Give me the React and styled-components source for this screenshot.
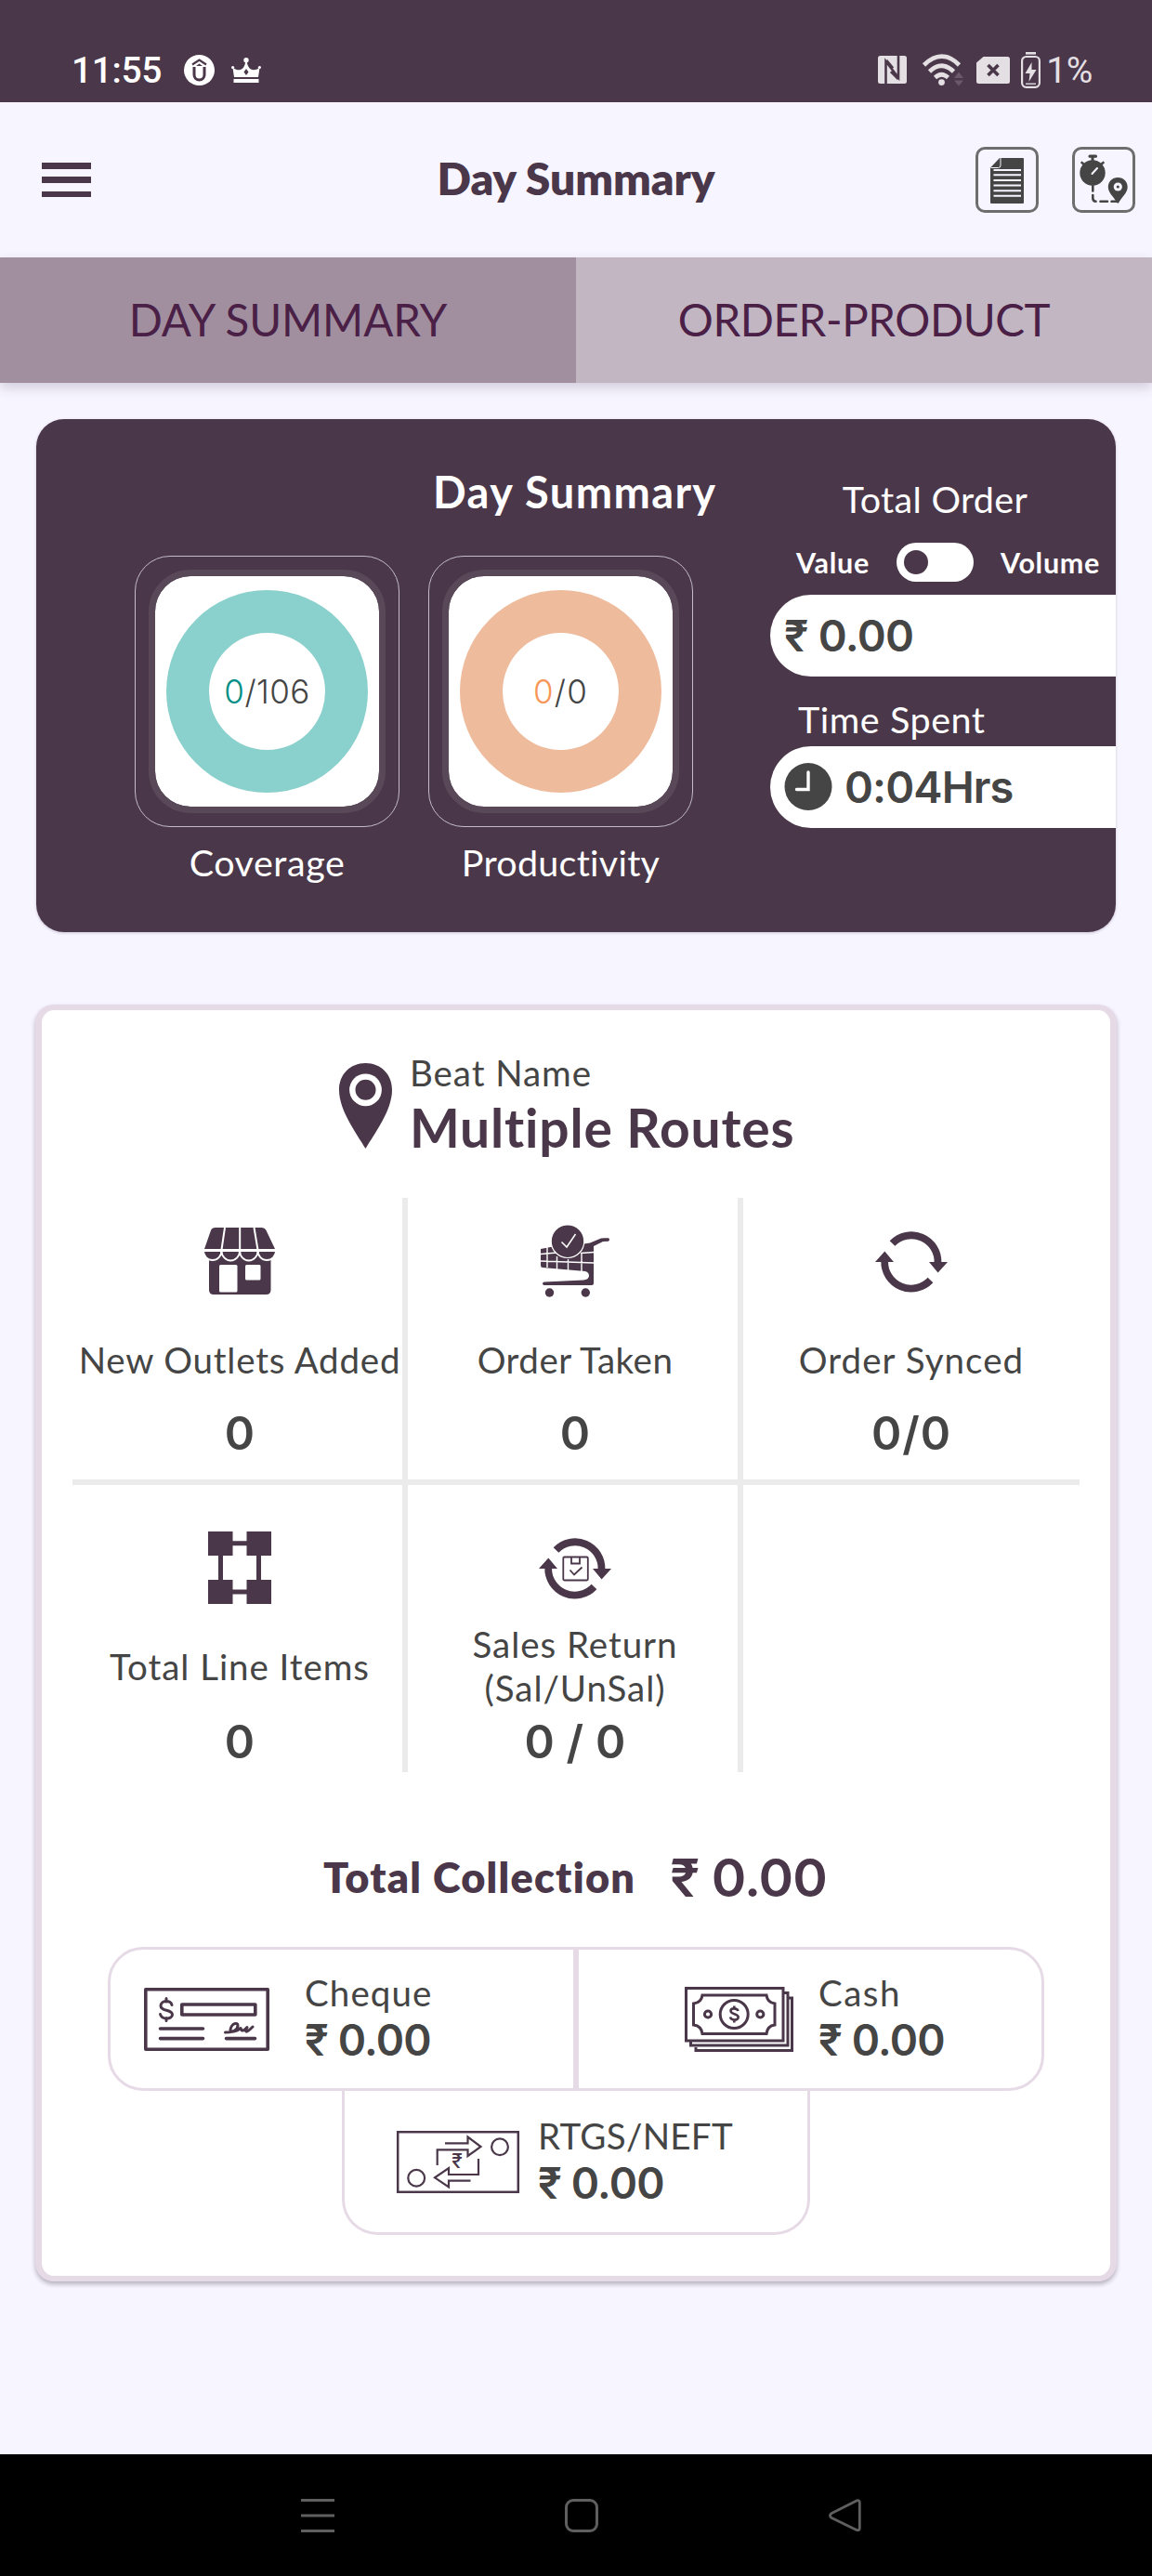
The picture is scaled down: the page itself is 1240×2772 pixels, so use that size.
import React from "react";
import styled, { createGlobalStyle } from "styled-components";

const plum = "#4a3749";
const ink = "#444544";
const lilac = "#e6dae6";
const rule = "#ebebeb";

const Global = createGlobalStyle`
  * { box-sizing: border-box; }
  body { margin: 0; background: #f7f5ff; }
  svg { display: block; flex: none; overflow: visible; }
`;

const Screen = styled.div`
  width: 1240px;
  height: 2772px;
  display: flex;
  flex-direction: column;
  background: #f7f5ff;
  font-family: Lato, "Open Sans", sans-serif;
  font-variant-ligatures: none;
  white-space: nowrap;
  overflow: hidden;
`;

/* ---------- status bar ---------- */
const StatusBar = styled.div`
  height: 110px;
  flex: none;
  background: ${plum};
  padding: 40px 64px 0 77px;
  display: flex;
  justify-content: space-between;
`;
const StatusGroup = styled.div`
  display: flex;
  align-items: center;
  height: 70px;
  color: ${(p) => (p.$dim ? "#e3dfe3" : "#fff")};
  font: 500 39px/70px Roboto, sans-serif;
  letter-spacing: -0.4px;
`;
const Clock = styled.span`
  width: 121px;
  padding-top: 1px;
`;
const Percent = styled.span`
  margin-left: 6px;
  padding-top: 1px;
  font-weight: 450;
`;
const Slot = styled.span`margin-left: ${(p) => p.$gap}px;`;

/* ---------- header ---------- */
const Header = styled.header`
  height: 167px;
  flex: none;
  display: grid;
  grid-template-columns: 400px 1fr 427px;
  align-items: center;
  padding: 0 18px 0 45px;
`;
const Menu = styled.button`
  width: 53px;
  height: 37px;
  padding: 0;
  border: 0;
  background: none;
  display: flex;
  flex-direction: column;
  justify-content: space-between;
`;
const MenuBar = styled.i`
  width: 53px;
  height: 6.5px;
  background: ${plum};
`;
const PageTitle = styled.h1`
  margin: 0 0 3px;
  text-align: center;
  font-size: 48px;
  font-weight: 800;
  letter-spacing: -0.1px;
  line-height: 60px;
  color: ${plum};
`;
const Actions = styled.div`
  display: flex;
  justify-content: flex-end;
  gap: 36px;
`;
const Action = styled.button`
  width: 68px;
  height: 71px;
  padding: 0;
  border: 3px solid #6e6e6e;
  border-radius: 10px;
  background: none;
  svg { margin: -3px; }
`;

/* ---------- tabs ---------- */
const Tabs = styled.nav`
  display: flex;
  height: 135px;
  flex: none;
  box-shadow: 0 5px 12px rgba(60, 40, 70, 0.2);
`;
const Tab = styled.div`
  flex: 1;
  display: flex;
  align-items: center;
  justify-content: center;
  padding-bottom: 2px;
  background: ${(p) => (p.$active ? "#a18f9f" : "#c2b6c3")};
  color: #4a2047;
  font-size: 47.5px;
  letter-spacing: ${(p) => (p.$active ? -0.05 : -0.4)}px;
`;

/* ---------- hero ---------- */
const Hero = styled.section`
  width: 1162px;
  height: 552px;
  flex: none;
  margin: 39px 0 0 39px;
  border-radius: 30px;
  overflow: hidden;
  background: ${plum};
  color: #fff;
  display: flex;
  box-shadow: 0 1px 3px rgba(60, 40, 70, 0.25);
`;
const Progress = styled.div`
  width: 790px;
  flex: none;
  padding-top: 54px;
`;
const HeroTitle = styled.h2`
  margin: 0 0 45px 427px;
  height: 48px;
  font-size: 47px;
  font-weight: 700;
  letter-spacing: 1.4px;
  line-height: 48px;
`;
const Tiles = styled.div`
  display: flex;
  gap: 31px;
  padding-left: 106px;
`;
const Tile = styled.div`width: 285px;`;
const TileFrame = styled.div`
  height: 292px;
  border: 1px solid #c3bcc8;
  border-radius: 38px;
  padding: 14px;
`;
const TileCard = styled.div`
  height: 262px;
  border: 7.5px solid #594858;
  border-radius: 45px;
  background: #fff;
  background-clip: padding-box;
  display: flex;
  align-items: center;
  justify-content: center;
`;
const Donut = styled.div`
  width: 217px;
  height: 218px;
  flex: none;
  border-radius: 50%;
  border: 46px solid ${(p) => p.$ring};
  display: flex;
  align-items: center;
  justify-content: center;
  font: 350 35px/40px Inter, sans-serif;
  letter-spacing: ${(p) => p.$track}px;
  color: ${ink};
`;
const Done = styled.span`color: ${(p) => p.$color};`;
const TileLabel = styled.div`
  margin-top: 14px;
  text-align: center;
  font-size: 39.5px;
  line-height: 48px;
  letter-spacing: ${(p) => p.$track}px;
`;

const Totals = styled.div`
  width: 372px;
  flex: none;
  padding-top: 62px;
`;
const TotalTitle = styled.div`
  width: 355px;
  text-align: center;
  font-size: 39.5px;
  letter-spacing: 0.3px;
  line-height: 48px;
`;
const SwitchRow = styled.div`
  display: flex;
  align-items: center;
  gap: 29px;
  height: 42px;
  margin: 22.5px 0 14.5px;
  padding-left: 28px;
  font-size: 30.5px;
  font-weight: 700;
  letter-spacing: 0.7px;
`;
const Switch = styled.div`
  width: 83px;
  height: 42px;
  padding: 0 8px;
  border-radius: 21px;
  background: #fff;
  display: flex;
  align-items: center;
`;
const Knob = styled.i`
  width: 26px;
  height: 26px;
  border-radius: 50%;
  background: ${plum};
`;
const Pill = styled.div`
  height: 88px;
  border-radius: 44px 0 0 44px;
  background: #fff;
  color: ${ink};
  display: flex;
  align-items: center;
  gap: 13px;
  padding: 0 0 0 15px;
  font: 560 47px/60px Inter, sans-serif;
  letter-spacing: ${(p) => p.$track}px;
`;
const TimeTitle = styled.div`
  margin: 22px 0 5px 30px;
  font-size: 39.5px;
  letter-spacing: 0.55px;
  line-height: 48px;
`;

/* ---------- details card ---------- */
const Card = styled.section`
  width: 1164px;
  height: 1374px;
  flex: none;
  margin: 78px 0 0 38px;
  border: 7px solid ${lilac};
  border-top-width: 6px;
  border-bottom-width: 6px;
  border-radius: 20px;
  background: #fff;
  box-shadow: 0 3px 5px rgba(40, 30, 50, 0.32);
`;
const Beat = styled.div`
  height: 202px;
  padding: 43px 0 0 320px;
  display: flex;
  gap: 19px;
  svg { margin-top: 14px; }
`;
const BeatLabel = styled.div`
  font-size: 38.5px;
  letter-spacing: 0.95px;
  line-height: 48px;
  color: ${ink};
`;
const BeatName = styled.div`
  font-size: 57px;
  font-weight: 700;
  letter-spacing: 0.8px;
  line-height: 70px;
  color: ${plum};
`;
const Stats = styled.div`
  margin-left: 33px;
  width: 1084px;
  display: grid;
  grid-template-columns: 361px 361px 362px;
  grid-template-rows: 309px 309px;
`;
const Stat = styled.div`
  display: flex;
  flex-direction: column;
  align-items: center;
  padding-top: ${(p) => (p.$lower ? 44 : 23)}px;
  padding-left: ${(p) => (p.$last ? 0 : 5)}px;
  border-right: ${(p) => (p.$last ? 0 : 6)}px solid ${rule};
  border-bottom: ${(p) => (p.$lower ? 0 : 6)}px solid ${rule};
`;
const StatIcon = styled.div`
  height: 90px;
  display: flex;
  align-items: center;
`;
const StatLabel = styled.div`
  height: 94px;
  margin: 14px 0 ${(p) => (p.$lower ? 5 : 3)}px;
  display: flex;
  align-items: center;
  text-align: center;
  white-space: pre-line;
  font-size: 38.5px;
  line-height: 47px;
  letter-spacing: ${(p) => p.$track}px;
  color: ${ink};
`;
const StatValue = styled.div`
  font: 560 49px/60px Inter, sans-serif;
  letter-spacing: ${(p) => p.$track || 0}px;
  color: ${ink};
`;
const Collection = styled.div`
  height: 188px;
  padding: 80px 0 42px 303px;
  display: flex;
  align-items: center;
  gap: 37px;
  color: ${plum};
`;
const CollectionLabel = styled.div`
  font-size: 45px;
  font-weight: 800;
  letter-spacing: 1.25px;
`;
const CollectionValue = styled.div`
  padding-top: 1px;
  font: 560 57px/66px Inter, sans-serif;
  letter-spacing: -0.9px;
`;
const Payments = styled.div`
  width: 1008px;
  margin-left: 71px;
  display: flex;
  flex-wrap: wrap;
  justify-content: center;
`;
const Payment = styled.div`
  width: 504px;
  height: 155px;
  border: 3px solid ${lilac};
  display: flex;
  align-items: center;
  padding-left: ${(p) => p.$inset}px;
  gap: ${(p) => p.$gap}px;
  ${(p) => p.$side === "left" && "border-radius: 38px 0 0 38px;"}
  ${(p) => p.$side === "right" && "border-radius: 0 38px 38px 0;"}
  ${(p) => p.$side === "bottom" && "border-radius: 0 0 38px 38px; border-top: 0;"}
`;
const PaymentText = styled.div`
  padding-bottom: 3px;
`;
const PaymentLabel = styled.div`
  font-size: 38.5px;
  line-height: 48px;
  letter-spacing: ${(p) => p.$track}px;
  color: ${ink};
`;
const PaymentValue = styled.div`
  font: 560 46px/54px Inter, sans-serif;
  letter-spacing: -0.8px;
  color: ${ink};
`;

/* ---------- navigation ---------- */
const NavBar = styled.footer`
  height: 131px;
  flex: none;
  margin-top: auto;
  background: #000;
  display: flex;
  align-items: center;
  padding: 0 312px 0 324px;
  justify-content: space-between;
`;

/* ---------- icons ---------- */
const LogoIcon = () => (
  <svg width="33" height="33" viewBox="0 0 33 33">
    <circle cx="16.5" cy="16.5" r="16.5" fill="#fff" />
    <path d="M9 10.5 16.5 5.5 24 10.5" fill="none" stroke={plum} strokeWidth="2.2" />
    <path d="M11 13V21.5a5.5 5.5 0 0 0 11 0V13" fill="none" stroke={plum} strokeWidth="3" />
    <path d="M16.5 9.5 20 12H13Z" fill={plum} />
  </svg>
);
const CrownIcon = () => (
  <svg width="32" height="27" viewBox="0 0 32 27" fill="#fff">
    <circle cx="16" cy="2.7" r="2.7" />
    <circle cx="1.6" cy="10.5" r="1.6" />
    <circle cx="30.4" cy="10.5" r="1.6" />
    <path d="M1.5 11Q7 14.5 11 12.5 14.5 10.5 15.3 4H16.7Q17.5 10.5 21 12.5 25 14.5 30.5 11L29 21H3Z" />
    <rect x="2.5" y="23" width="27" height="4" />
    <path d="M16 12 18.5 15.5 16 19 13.5 15.5Z" fill={plum} />
  </svg>
);
const NfcIcon = () => (
  <svg width="31" height="30" viewBox="0 0 31 30">
    <rect width="31" height="30" rx="2.5" fill="#e3dfe3" />
    <path d="M8.5 30V6L22 23.5V0" fill="none" stroke={plum} strokeWidth="2.6" />
    <path d="M9 5 16 13.5M14 17 22 25" fill="none" stroke={plum} strokeWidth="3" />
  </svg>
);
const WifiIcon = () => (
  <svg width="44" height="34" viewBox="0 0 44 34" fill="none" stroke="#e3dfe3" strokeWidth="4.6">
    <path d="M1.5 12Q20.5-7 39.5 12M7.5 19Q20.5 6.5 33.5 19M13.5 25.5Q20.5 19 27.5 25.5" />
    <circle cx="20.5" cy="30.6" r="3.4" fill="#e3dfe3" stroke="none" />
    <path d="M34 26 39 19.5 44 26ZM34 28.5 39 34.5 44 28.5Z" fill="#6b5969" stroke="none" />
  </svg>
);
const SimIcon = () => (
  <svg width="36" height="29" viewBox="0 0 36 29">
    <path d="M7.5 0H33.5Q36 0 36 2.5V26.5Q36 29 33.5 29H2.5Q0 29 0 26.5V6.5Z" fill="#e3dfe3" />
    <path d="M12.5 9 23.5 20M23.5 9 12.5 20" stroke={plum} strokeWidth="3.6" />
  </svg>
);
const BatteryIcon = () => (
  <svg width="21" height="39" viewBox="0 0 21 39">
    <rect x="5" width="11" height="2.6" fill="#e3dfe3" />
    <rect x="1.1" y="5" width="18.8" height="32.8" rx="4.5" fill="none" stroke="#e3dfe3" strokeWidth="2.2" />
    <path d="M11.5 11 4.5 23H9.5L8.5 32 16.5 19H11.5Z" fill="#e3dfe3" />
    <path d="M5 34.2H16" stroke="#e3dfe3" strokeWidth="1.4" />
  </svg>
);
const DocIcon = () => (
  <svg width="68" height="71" viewBox="0 0 68 71">
    <path d="M26 12H51Q52 12 52 13V60Q52 61 51 61H17Q16 61 16 60V22.5Z" fill="#444544" />
    <path d="M27 12V20Q27 22.5 24.5 22.5H16.5" fill="none" stroke="#f7f5ff" strokeWidth="1" />
    <path d="M19.5 25H49M19.5 30.3H49M19.5 36H49M19.5 41.5H49M19.5 47.2H49M19.5 52.7H49" stroke="#f7f5ff" strokeWidth="2" />
  </svg>
);
const TrackIcon = () => (
  <svg width="68" height="71" viewBox="0 0 68 71">
    <g fill="#444544">
      <circle cx="22" cy="28" r="13.7" />
      <rect x="17.5" y="8.5" width="9.5" height="3.2" rx="1.5" />
      <path d="M20.5 11H23.5V16H20.5Z" />
      <path d="M49.3 33C43 33 38.8 37.6 38.8 43.3C38.8 50 46 55 48.5 60.5H50C52.5 55 59.7 50 59.7 43.3C59.7 37.6 55.5 33 49.3 33Z" />
    </g>
    <circle cx="49.3" cy="43" r="4.6" fill="#f7f5ff" />
    <circle cx="49.3" cy="43" r="1.6" fill="#444544" />
    <path d="M21.5 29 27 23" stroke="#f7f5ff" strokeWidth="2" strokeLinecap="round" />
    <path d="M10.5 17 13.5 19.5M33.5 17 30.5 19.5M22.3 42V47.5M22.3 52V55Q22.3 58.7 25.5 58.7M30.5 58.7H38M42.5 58.7H49" fill="none" stroke="#444544" strokeWidth="2.6" strokeLinecap="round" />
  </svg>
);
const TimeIcon = () => (
  <svg width="52" height="52" viewBox="0 0 52 52">
    <circle cx="26" cy="25.5" r="25.5" fill="#444544" />
    <path d="M26 10V28.5H13.5" fill="none" stroke="#fff" strokeWidth="3.4" strokeLinecap="round" />
  </svg>
);
const PinIcon = () => (
  <svg width="57" height="92" viewBox="0 0 57 92" fill={plum}>
    <path d="M28.5 0C12 0 0 12 0 29C0 51 19 76 28.5 92C38 76 57 51 57 29C57 12 45 0 28.5 0Z" />
    <circle cx="28.5" cy="28.8" r="17.4" fill="#fff" />
    <circle cx="28.5" cy="28.8" r="11" />
  </svg>
);
const ShopIcon = () => (
  <svg width="78" height="72" viewBox="0 0 78 72">
    <path d="M6 30H72.5V67Q72.5 72 67.5 72H11Q6 72 6 67Z" fill={plum} />
    <path d="M0 25H19.5A9.75 10 0 0 1 0 25ZM19.5 25H39A9.75 10.5 0 0 1 19.5 25ZM39 25H58.5A9.75 10.5 0 0 1 39 25ZM58.5 25H78A9.75 10 0 0 1 58.5 25Z" fill={plum} stroke="#fff" strokeWidth="1.8" />
    <path d="M13 0H62Q66 0 67.5 3L77 23H1L8 3Q9 0 13 0Z" fill={plum} />
    <path d="M23 0 19 27M39.2 0V30M54.5 0 59 27M0 24.5H78" stroke="#fff" strokeWidth="2" />
    <rect x="17" y="40" width="19.5" height="29.5" rx="1.5" fill="#fff" />
    <rect x="45" y="40" width="16.5" height="16.5" rx="1.5" fill="#fff" />
  </svg>
);
const CartIcon = () => (
  <svg width="74" height="78" viewBox="13 8 74 78" fill={plum}>
    <path d="M13 34 26 31.5 56 29 66 27.5 78 22.5Q80 22 86 22.3Q88 24 86 25.7L80 26 70 31V71Q70 73 67 73H17Q15 73 15 71.3Q15 69.5 17 69.5L59 67.5Q64.5 67 65 63Q65 59 61 58L15 54Q13 54 13 51Z" />
    <path d="M13 39.5 30 38M56 38.5 70 37.5M13 47 70 49M20 31V54M30.5 42V56M42.5 45V57.5M57 38V59" stroke="#fff" strokeWidth="1.4" fill="none" />
    <circle cx="42" cy="25.7" r="17.8" stroke="#fff" strokeWidth="1.2" />
    <path d="M35.5 26.5 41 32 50.5 18" stroke="#fff" strokeWidth="1.6" fill="none" />
    <circle cx="22.5" cy="81" r="4.7" />
    <circle cx="61.3" cy="81" r="4.7" />
  </svg>
);
const CycleArrows = () => (
  <>
    <path d="M18.5 13A28.5 28.5 0 0 1 67.5 34M10.2 32A28.5 28.5 0 0 0 59.5 52.5" fill="none" stroke={plum} strokeWidth="7.8" />
    <path d="M58 33H78L67.6 44.5ZM0 33H20L10.3 21.5Z" fill={plum} />
  </>
);
const SyncIcon = () => (
  <svg width="78" height="65" viewBox="0 0 78 65"><CycleArrows /></svg>
);
const ReturnIcon = () => (
  <svg width="78" height="65" viewBox="0 0 78 65">
    <CycleArrows />
    <g fill="none" stroke={plum} strokeWidth="1.8">
      <rect x="26.3" y="20.5" width="26.5" height="25" rx="1.2" />
      <path d="M35 20.5V27.5H44V20.5M33.5 34.5 38 39.5 46.5 31.5" />
    </g>
  </svg>
);
const LinesIcon = () => (
  <svg width="68" height="78" viewBox="0 0 68 78" fill={plum}>
    <path d="M0 0H26.5V26H0ZM41.5 0H68V26H41.5ZM0 52H26.5V78H0ZM41.5 52H68V78H41.5Z" />
    <path d="M13.5 20V60M54.5 20V60M20 12.8H48M20 65H48" stroke={plum} strokeWidth="5" />
  </svg>
);
const ChequeIcon = () => (
  <svg width="135" height="68" viewBox="0 0 135 68" fill="none" stroke={plum} strokeWidth="3.6" strokeLinejoin="round" strokeLinecap="round">
    <rect x="1.8" y="1.8" width="131.4" height="64.4" />
    <rect x="40.8" y="18" width="79" height="11" />
    <path d="M17.5 44H63.5M17.5 54.6H63.5M88.5 54.6H119.5" />
    <path d="M30 18.5C29 13 18 13 18 19.5C18 26 30.5 22.5 30.5 29C30.5 34.5 19 34.5 17.5 28.5M24 11.5V15M24 32.5V35.5" strokeWidth="3" />
    <path d="M87.5 48C98 48 101 44 101 40.5C101 37 94.5 37.5 93 45C92.5 48.5 99 47.5 104 43.5C105 47 107 47 111 42.5C108 48.5 110 49 117 42" strokeWidth="3" />
  </svg>
);
const CashIcon = () => (
  <svg width="117" height="70" viewBox="0 0 117 70" fill="none" stroke={plum} strokeWidth="3">
    <rect x="1.5" y="1.5" width="104.5" height="56.5" />
    <path d="M107 6.5H111V63H6.5V59M112 12H115.5V68.5H12V65" />
    <path d="M19 9H88Q89 17 97 18V41Q89 42 88 50.5H19Q18 42 9.5 41V18Q18 17 19 9Z" />
    <circle cx="53.2" cy="29.5" r="15" />
    <circle cx="25" cy="29.5" r="3.6" />
    <circle cx="81.3" cy="29.5" r="3.6" />
    <path d="M57.5 26C56.5 22.5 49.5 22.5 49.5 26C49.5 30 57.7 28.5 57.7 32.8C57.7 36.5 50 36.5 49 32.5M53.3 20.5V24M53.3 35.5V38.5" strokeWidth="2.6" />
  </svg>
);
const RupeeMark = styled.text`
  font: 500 21px Inter, "DejaVu Sans", sans-serif;
  fill: ${plum};
  stroke: none;
`;
const TransferIcon = () => (
  <svg width="132" height="67" viewBox="0 0 132 67" fill="none" stroke={plum} strokeWidth="2.2">
    <rect x="1.2" y="1.2" width="129.6" height="64.6" strokeWidth="2.5" />
    <circle cx="111" cy="17.3" r="8.9" />
    <circle cx="21.2" cy="50.7" r="8.9" />
    <path d="M52 13.3H76.5V6.5L90.5 17 76.5 27V20.3H43.7V37" />
    <path d="M79.5 53.7H56V60.5L41 50.3 56 40V47H88V30" />
    <RupeeMark x="65" y="40" textAnchor="middle">₹</RupeeMark>
  </svg>
);
const RecentsIcon = () => (
  <svg width="36" height="36" viewBox="0 0 36 36" stroke="#5f5f5f" strokeWidth="3">
    <path d="M0 1.5H36M0 18H36M0 34.5H36" />
  </svg>
);
const HomeIcon = () => (
  <svg width="36" height="36" viewBox="0 0 36 36" fill="none" stroke="#5f5f5f" strokeWidth="3">
    <rect x="1.5" y="1.5" width="33" height="33" rx="7.5" />
  </svg>
);
const BackIcon = () => (
  <svg width="36" height="36" viewBox="0 0 36 36" fill="none" stroke="#5f5f5f" strokeWidth="2.8" strokeLinejoin="round">
    <path d="M30.5 1.8 2.7 15.8Q.2 18 2.7 20.2L30.5 33.7Q33.3 34 33.3 31.5V4Q33.3 1.5 30.5 1.8Z" />
  </svg>
);

const stats = [
  { icon: <ShopIcon />, label: "New Outlets Added", value: "0", track: 0.8 },
  { icon: <CartIcon />, label: "Order Taken", value: "0", track: 0.5 },
  { icon: <SyncIcon />, label: "Order Synced", value: "0/0", track: 1.05, valueTrack: 1, last: true },
  { icon: <LinesIcon />, label: "Total Line Items", value: "0", track: 0.95, lower: true },
  { icon: <ReturnIcon />, label: "Sales Return\n(Sal/UnSal)", value: "0 / 0", track: 0.95, valueTrack: 0.2, lower: true },
];

export default function App() {
  return (
    <Screen>
      <Global />
      <StatusBar>
        <StatusGroup>
          <Clock>11:55</Clock>
          <LogoIcon />
          <Slot $gap={18}><CrownIcon /></Slot>
        </StatusGroup>
        <StatusGroup $dim>
          <NfcIcon />
          <Slot $gap={17}><WifiIcon /></Slot>
          <Slot $gap={14}><SimIcon /></Slot>
          <Slot $gap={12}><BatteryIcon /></Slot>
          <Percent>1%</Percent>
        </StatusGroup>
      </StatusBar>

      <Header>
        <Menu aria-label="Menu"><MenuBar /><MenuBar /><MenuBar /></Menu>
        <PageTitle>Day Summary</PageTitle>
        <Actions>
          <Action><DocIcon /></Action>
          <Action><TrackIcon /></Action>
        </Actions>
      </Header>

      <Tabs>
        <Tab $active>DAY SUMMARY</Tab>
        <Tab>ORDER-PRODUCT</Tab>
      </Tabs>

      <Hero>
        <Progress>
          <HeroTitle>Day Summary</HeroTitle>
          <Tiles>
            <Tile>
              <TileFrame><TileCard>
                <Donut $ring="#8ad0cc" $track={0.4}><Done $color="#008f86">0</Done>/106</Donut>
              </TileCard></TileFrame>
              <TileLabel $track={0.55}>Coverage</TileLabel>
            </Tile>
            <Tile>
              <TileFrame><TileCard>
                <Donut $ring="#eebc9d" $track={1.2}><Done $color="#f79656">0</Done>/0</Donut>
              </TileCard></TileFrame>
              <TileLabel $track={0.25}>Productivity</TileLabel>
            </Tile>
          </Tiles>
        </Progress>
        <Totals>
          <TotalTitle>Total Order</TotalTitle>
          <SwitchRow>
            <span>Value</span>
            <Switch><Knob /></Switch>
            <span>Volume</span>
          </SwitchRow>
          <Pill $track={-0.7}>₹ 0.00</Pill>
          <TimeTitle>Time Spent</TimeTitle>
          <Pill $track={-0.9}><TimeIcon />0:04Hrs</Pill>
        </Totals>
      </Hero>

      <Card>
        <Beat>
          <PinIcon />
          <div>
            <BeatLabel>Beat Name</BeatLabel>
            <BeatName>Multiple Routes</BeatName>
          </div>
        </Beat>
        <Stats>
          {stats.map((s) => (
            <Stat key={s.label} $lower={s.lower} $last={s.last}>
              <StatIcon>{s.icon}</StatIcon>
              <StatLabel $track={s.track} $lower={s.lower}>{s.label}</StatLabel>
              <StatValue $track={s.valueTrack}>{s.value}</StatValue>
            </Stat>
          ))}
        </Stats>
        <Collection>
          <CollectionLabel>Total Collection</CollectionLabel>
          <CollectionValue>₹ 0.00</CollectionValue>
        </Collection>
        <Payments>
          <Payment $side="left" $inset={36} $gap={38}>
            <ChequeIcon />
            <PaymentText>
              <PaymentLabel $track={1.1}>Cheque</PaymentLabel>
              <PaymentValue>₹ 0.00</PaymentValue>
            </PaymentText>
          </Payment>
          <Payment $side="right" $inset={114} $gap={27}>
            <CashIcon />
            <PaymentText>
              <PaymentLabel $track={1.5}>Cash</PaymentLabel>
              <PaymentValue>₹ 0.00</PaymentValue>
            </PaymentText>
          </Payment>
          <Payment $side="bottom" $inset={56} $gap={20}>
            <TransferIcon />
            <PaymentText>
              <PaymentLabel $track={0.3}>RTGS/NEFT</PaymentLabel>
              <PaymentValue>₹ 0.00</PaymentValue>
            </PaymentText>
          </Payment>
        </Payments>
      </Card>

      <NavBar>
        <RecentsIcon />
        <HomeIcon />
        <BackIcon />
      </NavBar>
    </Screen>
  );
}
